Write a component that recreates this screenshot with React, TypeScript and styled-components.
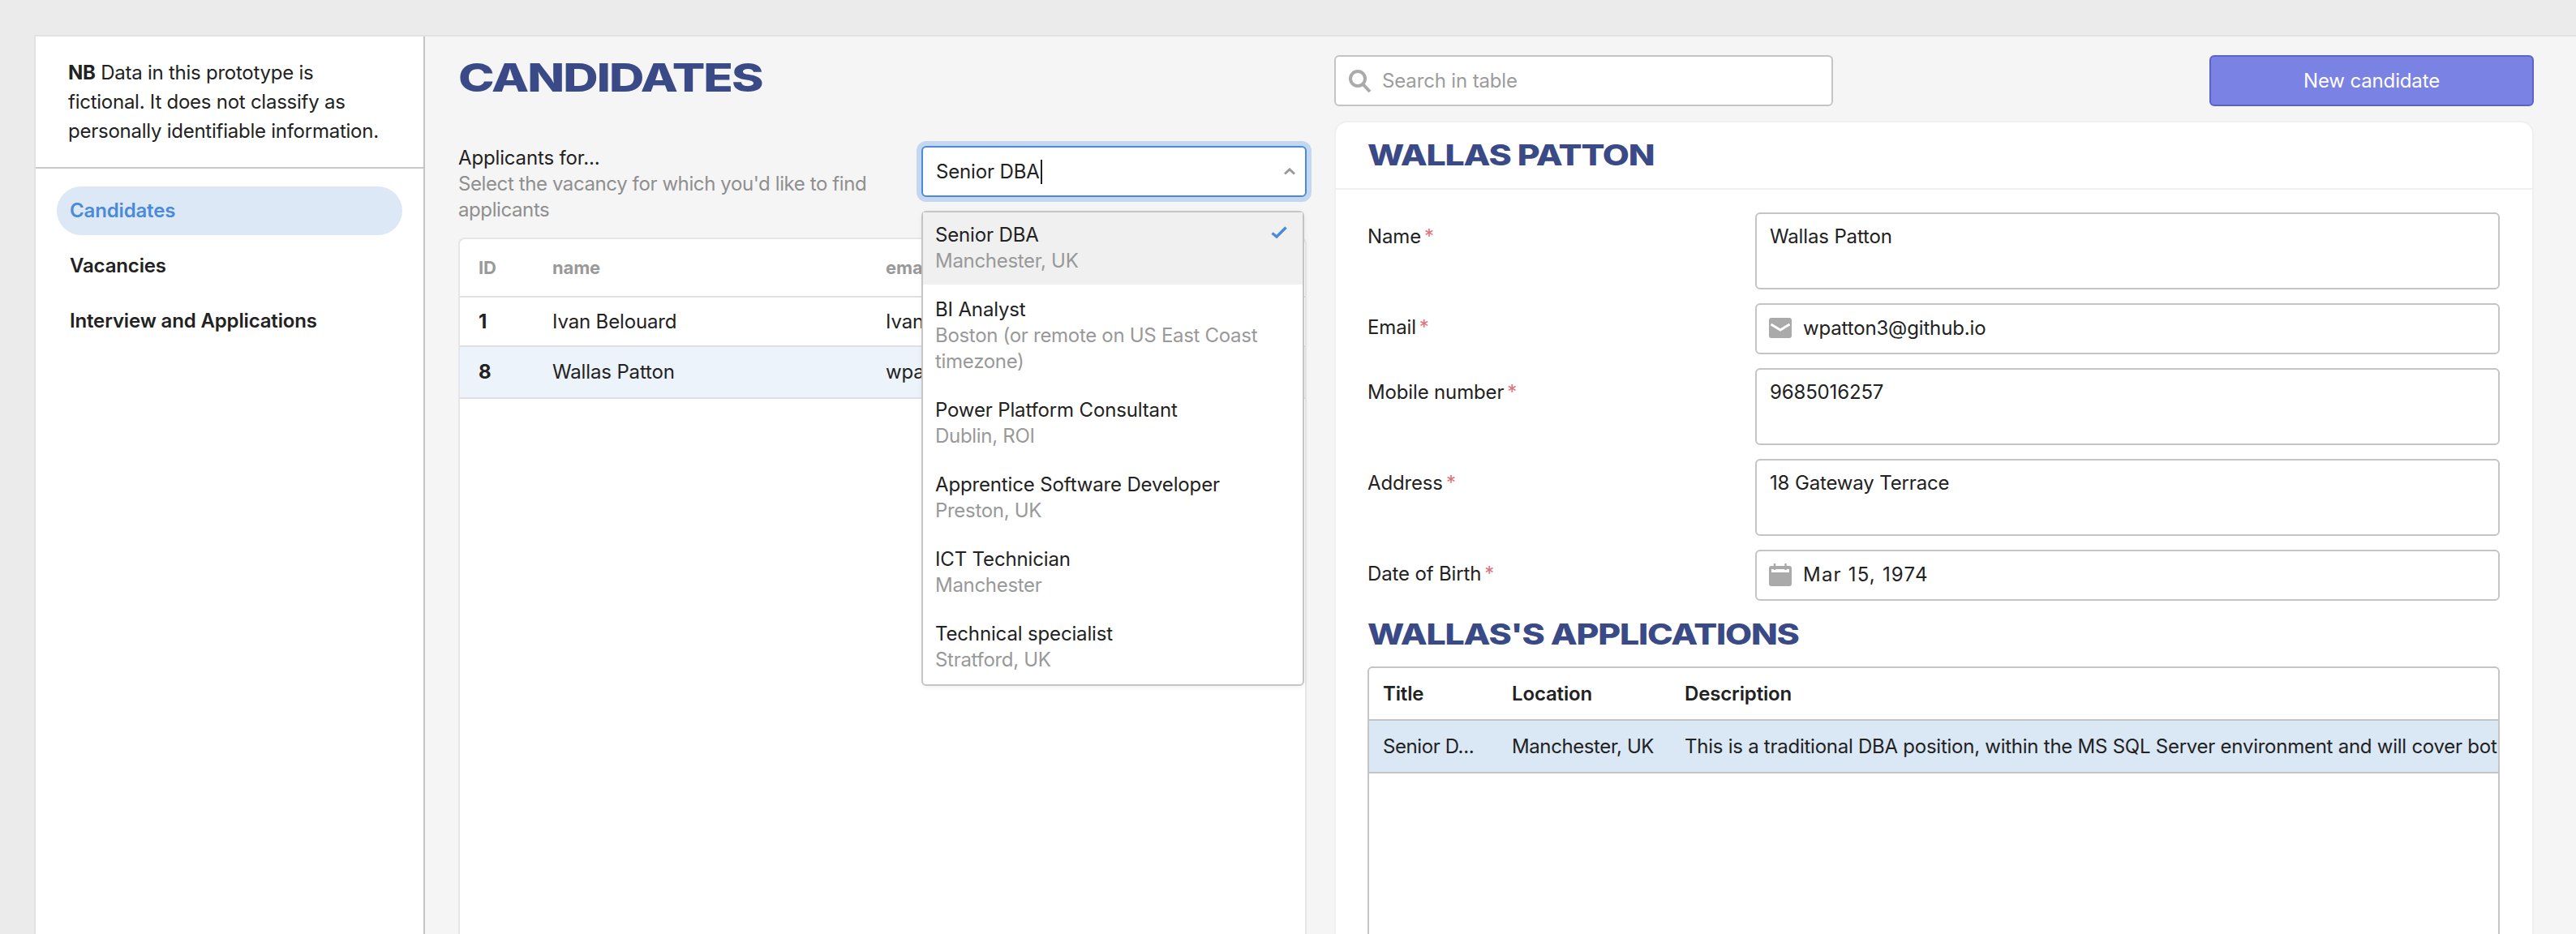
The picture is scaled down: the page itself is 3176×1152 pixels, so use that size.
import React from 'react';
import styled, { createGlobalStyle } from 'styled-components';

const GlobalStyle = createGlobalStyle`
  html, body, #root {
    margin: 0;
    height: 100%;
  }

  body {
    background: #ebebeb;
    color: #222;
    font-family: Inter, 'Noto Sans', sans-serif;
    font-size: 24px;
    line-height: 32px;
    letter-spacing: -0.15px;
    overflow: hidden;
  }

  * {
    box-sizing: border-box;
  }
`;

const Page = styled.div`
  display: flex;
  height: 100%;
  padding: 43px 0 0 42px;
`;

const Frame = styled.div`
  display: flex;
  flex: 1;
  min-width: 0;
  border-top: 2px solid #e2e2e2;
  border-left: 2px solid #e2e2e2;
`;

const Sidebar = styled.aside`
  flex: 0 0 480px;
  background: #fff;
  border-right: 2px solid #c4c4c4;
`;

const Notice = styled.p`
  height: 163px;
  margin: 0;
  padding: 27px 40px 0 40px;
  line-height: 36px;
  letter-spacing: -0.25px;
  border-bottom: 2px solid #c8c8c8;
`;

const Nav = styled.nav`
  display: flex;
  flex-direction: column;
  gap: 8px;
  padding: 22px 26px;
`;

const NavItem = styled.a<{ $active?: boolean }>`
  height: 60px;
  padding: 0 16px;
  border-radius: 30px;
  font-weight: 600;
  line-height: 60px;
  color: ${(p) => (p.$active ? '#4a8ad8' : '#222')};
  background: ${(p) => (p.$active ? '#dde8f7' : 'transparent')};
`;

const Main = styled.main`
  flex: 1;
  min-width: 0;
  display: flex;
  gap: 34px;
  padding: 23px 52px 0 41px;
  background: #f5f5f5;
`;

const LeftColumn = styled.section`
  position: relative;
  flex: 0 0 1046px;
  display: flex;
  flex-direction: column;
`;

const PageTitle = styled.h1`
  height: 106px;
  margin: 0;
  padding-top: 8px;
  font-size: 48px;
  line-height: 40px;
  font-weight: 800;
  color: #3a4a86;
  letter-spacing: -1.5px;
  transform: scaleX(1.25);
  transform-origin: left top;
`;

const SelectorRow = styled.div`
  display: flex;
  justify-content: space-between;
  height: 119px;
`;

const SelectorCopy = styled.div`
  width: 540px;
  padding-top: 5px;
`;

const SelectorHint = styled.div`
  color: #8f8f8f;
  letter-spacing: -0.4px;
`;

const SelectBox = styled.div`
  position: relative;
  width: 475px;
  height: 63px;
  margin-top: 6px;
  padding: 0 12px 0 16px;
  display: flex;
  align-items: center;
  justify-content: space-between;
  background: #fff;
  border: 2px solid #4a8ad8;
  border-radius: 6px;
  box-shadow: 0 0 0 6px #c3d7f0;
`;

const Caret = styled.span`
  width: 2px;
  height: 30px;
  margin-left: 1px;
  background: #222;
`;

const SelectValue = styled.span`
  display: flex;
  align-items: center;
`;

const Card = styled.div`
  flex: 1;
  min-height: 0;
  background: #fff;
  border: 2px solid #e6e6e6;
  border-bottom: 0;
  border-radius: 8px 8px 0 0;
  overflow: hidden;
`;

const CandidateRow = styled.div<{ $head?: boolean; $selected?: boolean }>`
  display: grid;
  grid-template-columns: 91px 411px 1fr;
  align-items: center;
  height: ${(p) => (p.$head ? '72px' : p.$selected ? '64px' : '61px')};
  padding-left: 23px;
  background: ${(p) => (p.$selected ? '#edf3fa' : 'transparent')};
  border-bottom: 2px solid #e0e0e0;
  font-size: ${(p) => (p.$head ? '22px' : '24px')};
  font-weight: ${(p) => (p.$head ? 700 : 400)};
  color: ${(p) => (p.$head ? '#999' : '#222')};
`;

const IdCell = styled.span`
  font-weight: 700;
`;

const Dropdown = styled.ul`
  position: absolute;
  z-index: 5;
  top: 192px;
  right: 3px;
  width: 472px;
  margin: 0;
  padding: 0 0 1px;
  list-style: none;
  background: #fff;
  border: 2px solid #c4c4c4;
  border-radius: 6px;
  box-shadow: 0 2px 6px rgba(0, 0, 0, 0.06);
`;

const Option = styled.li<{ $selected?: boolean }>`
  position: relative;
  padding: ${(p) => (p.$selected ? '12px 40px 13px 15px' : '15px 40px 13px 15px')};
  background: ${(p) => (p.$selected ? '#f0f0f0' : 'transparent')};
`;

const OptionSub = styled.div`
  color: #999;
  letter-spacing: -0.3px;
`;

const Check = styled.svg`
  position: absolute;
  top: 17px;
  right: 19px;
`;

const RightColumn = styled.section`
  flex: 1;
  min-width: 0;
  display: flex;
  flex-direction: column;
`;

const Toolbar = styled.div`
  display: flex;
  justify-content: space-between;
  height: 63px;
  margin-bottom: 18px;
`;

const SearchBox = styled.div`
  width: 615px;
  display: flex;
  align-items: center;
  gap: 13px;
  padding: 0 16px;
  background: #fff;
  border: 2px solid #c4c4c4;
  border-radius: 6px;
  color: #9c9c9c;
`;

const NewButton = styled.button`
  width: 400px;
  background: #7a82e4;
  border: 2px solid #5a63c8;
  border-radius: 6px;
  color: #fff;
  font: inherit;
  letter-spacing: inherit;
`;

const DetailCard = styled.div`
  flex: 1;
  min-height: 0;
  display: flex;
  flex-direction: column;
  background: #fff;
  border: 2px solid #efefef;
  border-bottom: 0;
  border-radius: 16px 16px 0 0;
`;

const DetailHeader = styled.header`
  flex: 0 0 83px;
  padding: 24px 39px 0;
  border-bottom: 2px solid #efefef;
`;

const SectionTitle = styled.h2`
  margin: 0;
  font-size: 35px;
  line-height: 32px;
  font-weight: 800;
  color: #3a4a86;
  letter-spacing: -1px;
  transform: scaleX(1.225);
  transform-origin: left top;
`;

const DetailBody = styled.div`
  flex: 1;
  min-height: 0;
  display: flex;
  flex-direction: column;
  padding: 28px 40px 0 39px;
`;

const FormRows = styled.div`
  display: flex;
  flex-direction: column;
  gap: 17px;
  margin-bottom: 25px;
`;

const FormRow = styled.div`
  display: grid;
  grid-template-columns: 478px 1fr;
`;

const FieldLabel = styled.label`
  padding-top: 14px;
`;

const Required = styled.span`
  margin-left: 4px;
  color: #e0707c;
`;

const Field = styled.div<{ $tall?: boolean }>`
  height: ${(p) => (p.$tall ? '95px' : '63px')};
  display: flex;
  align-items: ${(p) => (p.$tall ? 'flex-start' : 'center')};
  gap: 14px;
  padding: ${(p) => (p.$tall ? '12px 16px' : '0 15px 2px')};
  border: 2px solid #c4c4c4;
  border-radius: 6px;
`;

const DateValue = styled.span`
  letter-spacing: 1.2px;
`;

const ApplicationsTable = styled.div`
  flex: 1;
  min-height: 0;
  margin-top: 24px;
  border: 2px solid #c4c4c4;
  border-bottom: 0;
  border-radius: 6px 6px 0 0;
  overflow: hidden;
`;

const ApplicationRow = styled.div<{ $head?: boolean }>`
  display: grid;
  grid-template-columns: 159px 213px 1fr;
  align-items: center;
  height: 65px;
  padding-left: 17px;
  background: ${(p) => (p.$head ? 'transparent' : '#dae7f5')};
  border-bottom: 2px solid #c4c4c4;
  font-weight: ${(p) => (p.$head ? 600 : 400)};
  letter-spacing: ${(p) => (p.$head ? '-0.15px' : '-0.4px')};
  white-space: nowrap;
`;

const Clipped = styled.span`
  overflow: hidden;
  text-overflow: clip;
  letter-spacing: -0.25px;
`;

const candidates = [
  { id: 1, name: 'Ivan Belouard', email: 'Ivan', selected: false },
  { id: 8, name: 'Wallas Patton', email: 'wpatton3@github.io', selected: true },
];

const vacancies = [
  { title: 'Senior DBA', place: 'Manchester, UK', selected: true },
  { title: 'BI Analyst', place: 'Boston (or remote on US East Coast timezone)' },
  { title: 'Power Platform Consultant', place: 'Dublin, ROI' },
  { title: 'Apprentice Software Developer', place: 'Preston, UK' },
  { title: 'ICT Technician', place: 'Manchester' },
  { title: 'Technical specialist', place: 'Stratford, UK' },
];

const App = () => (
  <Page>
    <GlobalStyle />
    <Frame>
      <Sidebar>
        <Notice>
          <b>NB</b> Data in this prototype is fictional. It does not classify as personally identifiable information.
        </Notice>
        <Nav>
          <NavItem $active>Candidates</NavItem>
          <NavItem>Vacancies</NavItem>
          <NavItem>Interview and Applications</NavItem>
        </Nav>
      </Sidebar>
      <Main>
        <LeftColumn>
          <PageTitle>CANDIDATES</PageTitle>
          <SelectorRow>
            <SelectorCopy>
              Applicants for...
              <SelectorHint>Select the vacancy for which you'd like to find applicants</SelectorHint>
            </SelectorCopy>
            <SelectBox>
              <SelectValue>
                Senior DBA
                <Caret />
              </SelectValue>
              <svg width="14" height="9" viewBox="0 0 14 9" fill="none" stroke="#999" strokeWidth="3">
                <path d="M1 7.5 7 2l6 5.5" />
              </svg>
            </SelectBox>
          </SelectorRow>
          <Card>
            <CandidateRow $head>
              <span>ID</span>
              <span>name</span>
              <span>email</span>
            </CandidateRow>
            {candidates.map((c) => (
              <CandidateRow key={c.id} $selected={c.selected}>
                <IdCell>{c.id}</IdCell>
                <span>{c.name}</span>
                <span>{c.email}</span>
              </CandidateRow>
            ))}
          </Card>
          <Dropdown>
            {vacancies.map((v) => (
              <Option key={v.title} $selected={v.selected}>
                {v.title}
                <OptionSub>{v.place}</OptionSub>
                {v.selected && (
                  <Check width="20" height="15" viewBox="0 0 20 15" fill="none" stroke="#4a8ad8" strokeWidth="3.4">
                    <path d="M1.5 8.5 7 13 18.5 1.5" />
                  </Check>
                )}
              </Option>
            ))}
          </Dropdown>
        </LeftColumn>
        <RightColumn>
          <Toolbar>
            <SearchBox>
              <svg width="28" height="28" viewBox="0 0 28 28" fill="none" stroke="#aaa" strokeWidth="4">
                <circle cx="11" cy="11" r="9" />
                <path d="m17.5 18 8.5 9" />
              </svg>
              Search in table
            </SearchBox>
            <NewButton>New candidate</NewButton>
          </Toolbar>
          <DetailCard>
            <DetailHeader>
              <SectionTitle>WALLAS PATTON</SectionTitle>
            </DetailHeader>
            <DetailBody>
              <FormRows>
                <FormRow>
                  <FieldLabel>Name<Required>*</Required></FieldLabel>
                  <Field $tall>Wallas Patton</Field>
                </FormRow>
                <FormRow>
                  <FieldLabel>Email<Required>*</Required></FieldLabel>
                  <Field>
                    <svg width="28" height="25" viewBox="0 0 28 25">
                      <rect width="28" height="25" rx="3" fill="#aaa" />
                      <path d="M2.5 8 14 15l11.500-7" fill="none" stroke="#fff" strokeWidth="3" />
                    </svg>
                    wpatton3@github.io
                  </Field>
                </FormRow>
                <FormRow>
                  <FieldLabel>Mobile number<Required>*</Required></FieldLabel>
                  <Field $tall>9685016257</Field>
                </FormRow>
                <FormRow>
                  <FieldLabel>Address<Required>*</Required></FieldLabel>
                  <Field $tall>18 Gateway Terrace</Field>
                </FormRow>
                <FormRow>
                  <FieldLabel>Date of Birth<Required>*</Required></FieldLabel>
                  <Field>
                    <svg width="28" height="28" viewBox="0 0 28 28">
                      <path d="M0 6a3 3 0 0 1 3-3h22a3 3 0 0 1 3 3v19a3 3 0 0 1-3 3H3a3 3 0 0 1-3-3z" fill="#aaa" />
                      <rect x="3" y="7" width="22" height="4" fill="#fff" />
                      <path d="M7 0v8M20.500 0v8" stroke="#aaa" strokeWidth="2.4" />
                    </svg>
                    <DateValue>Mar 15, 1974</DateValue>
                  </Field>
                </FormRow>
              </FormRows>
              <SectionTitle>WALLAS'S APPLICATIONS</SectionTitle>
              <ApplicationsTable>
                <ApplicationRow $head>
                  <span>Title</span>
                  <span>Location</span>
                  <span>Description</span>
                </ApplicationRow>
                <ApplicationRow>
                  <span>Senior D...</span>
                  <span>Manchester, UK</span>
                  <Clipped>This is a traditional DBA position, within the MS SQL Server environment and will cover both</Clipped>
                </ApplicationRow>
              </ApplicationsTable>
            </DetailBody>
          </DetailCard>
        </RightColumn>
      </Main>
    </Frame>
  </Page>
);

export default App;
